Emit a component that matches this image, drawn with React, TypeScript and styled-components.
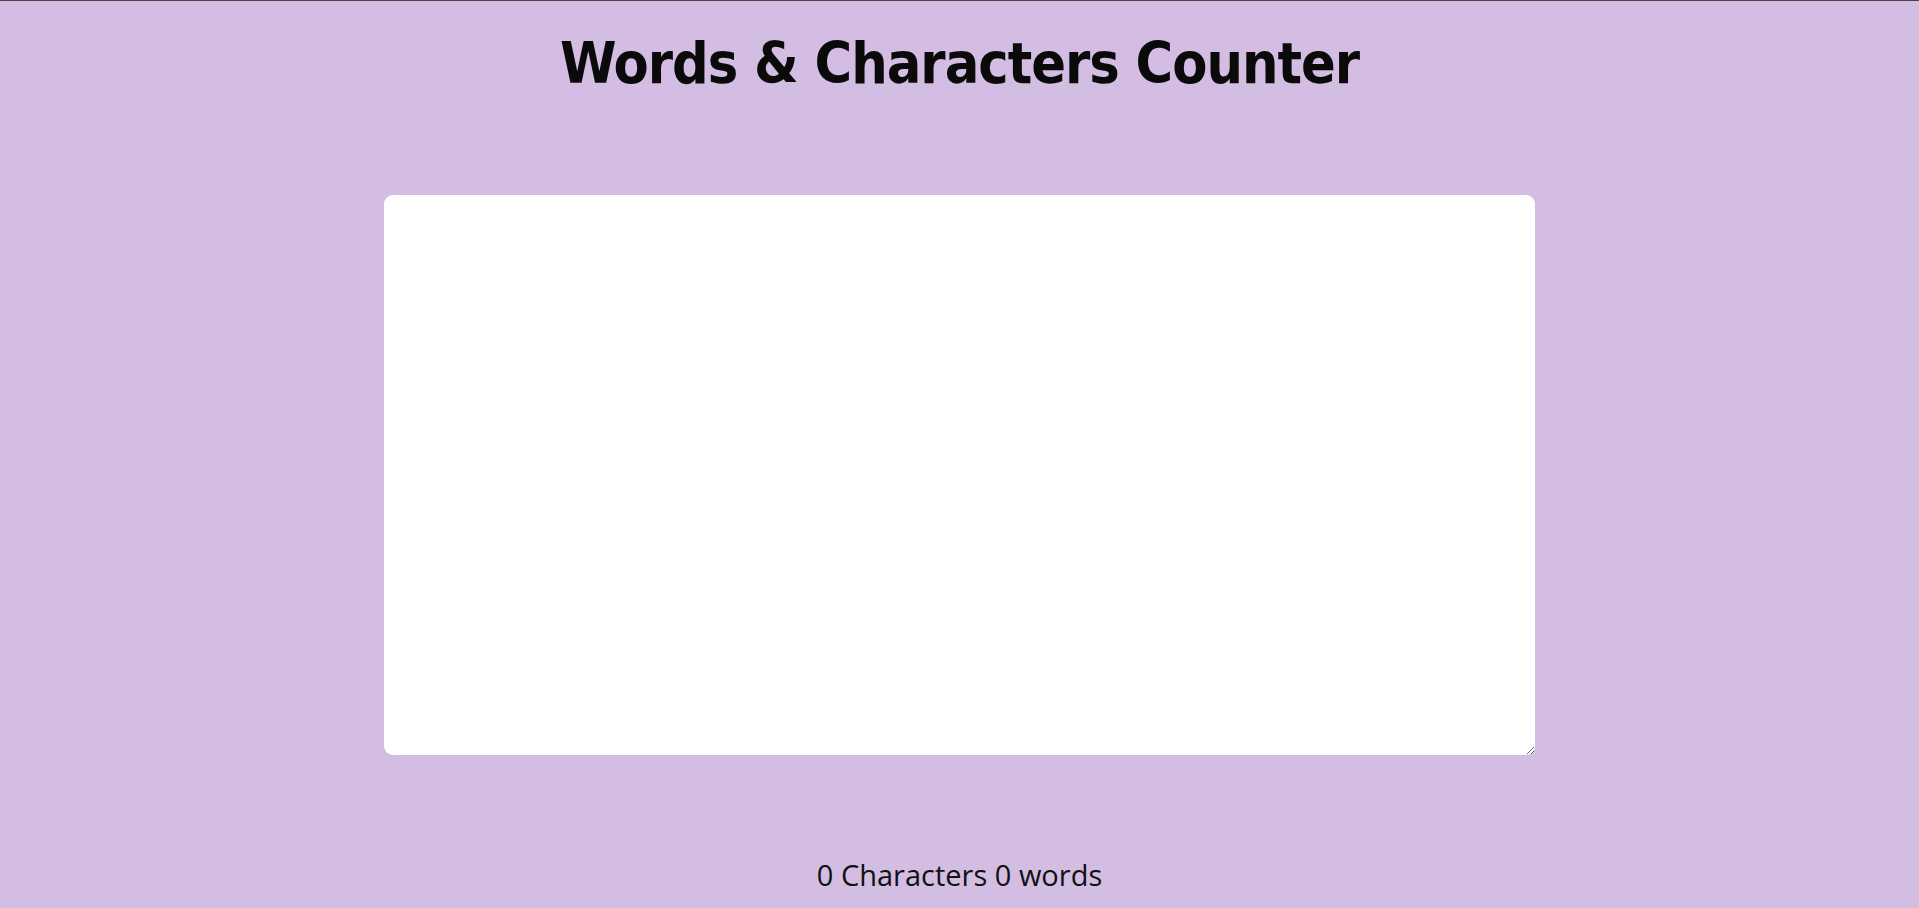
import React, { useState } from "react";
import styled, { createGlobalStyle } from "styled-components";

const Global = createGlobalStyle`
  html, body { margin: 0; padding: 0; }
  body {
    background: #d4bde3;
    font-family: "Open Sans", "Noto Sans", sans-serif;
    border-top: 1px solid #454545;
    min-height: 907px;
    overflow: hidden;
  }
`;

const Page = styled.main`
  display: flex;
  flex-direction: column;
  align-items: center;
`;

const Title = styled.h1`
  margin: 22px 0 0;
  font-family: "DejaVu Sans Condensed", "Open Sans", sans-serif;
  font-weight: 600;
  font-size: 57px;
  letter-spacing: -1px;
  line-height: 80px;
  color: #0a0a0a;
`;

const Input = styled.textarea`
  margin-top: 92px;
  width: 60%;
  height: 560px;
  box-sizing: border-box;
  border: none;
  border-radius: 9px;
  background: #ffffff;
  outline: none;
  padding: 10px;
  font-family: "Open Sans", sans-serif;
  font-size: 18px;
`;

const Stats = styled.p`
  margin: 100px 0 0;
  font-family: "Open Sans", sans-serif;
  font-size: 29px;
  line-height: 40px;
  color: #111;
`;

export default function App() {
  const [text, setText] = useState("");
  const chars = text.length;
  const words = text.trim() ? text.trim().split(/\s+/).length : 0;
  return (
    <Page>
      <Global />
      <Title>Words &amp; Characters Counter</Title>
      <Input value={text} onChange={(e) => setText(e.target.value)} />
      <Stats>
        {chars} Characters {words} words
      </Stats>
    </Page>
  );
}
